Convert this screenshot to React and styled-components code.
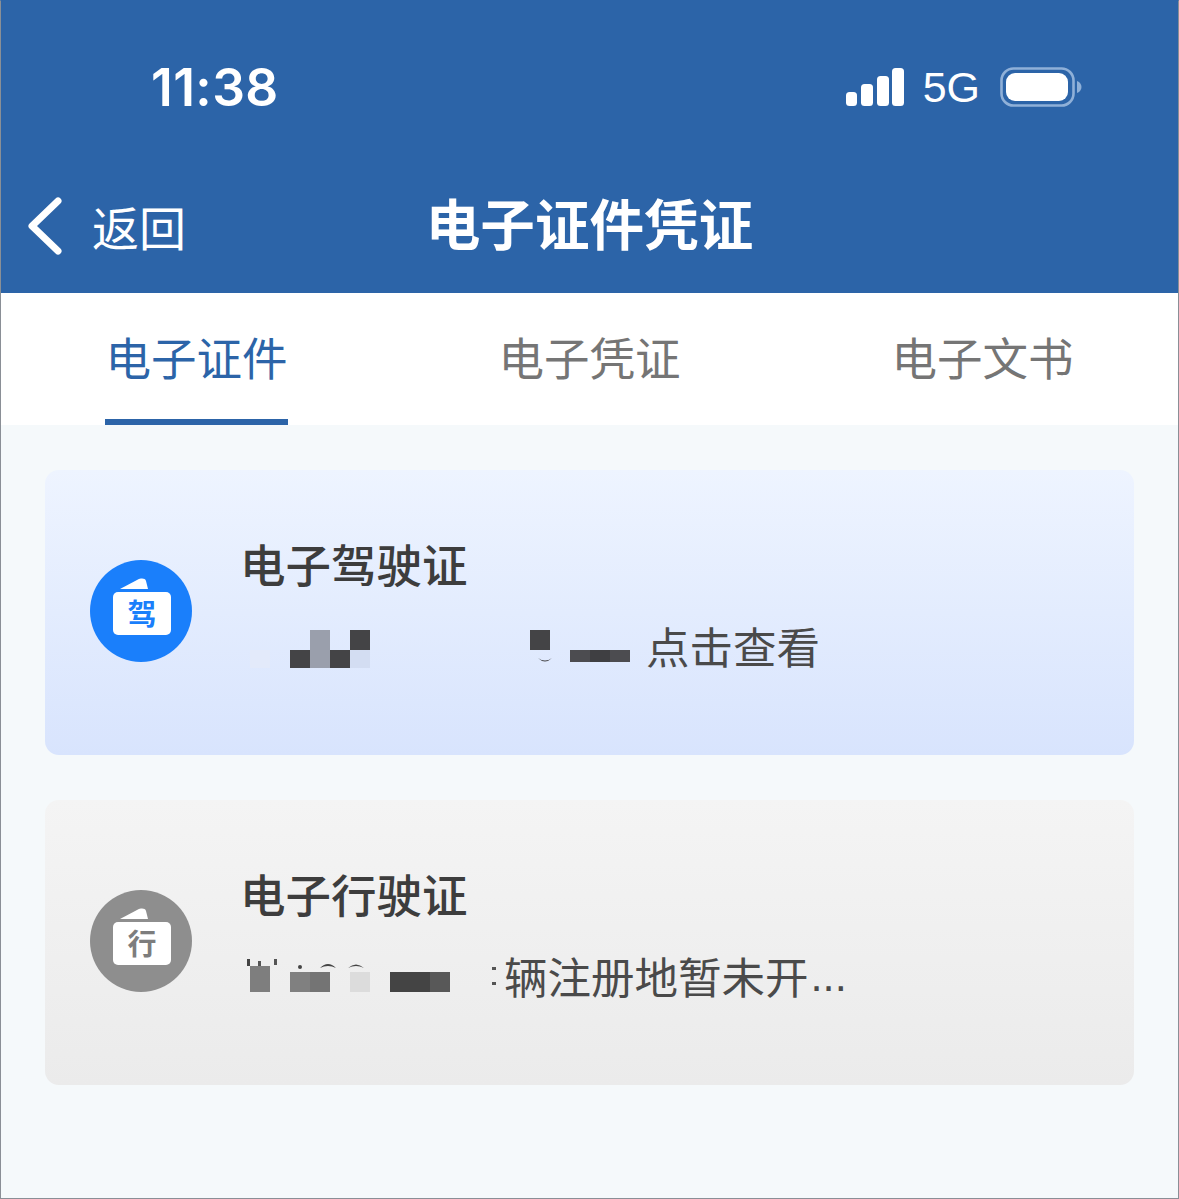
import React from "react";
import styled, { createGlobalStyle } from "styled-components";

const Global = createGlobalStyle`
  html, body { margin: 0; padding: 0; background: #f5f9fb; }
  * { box-sizing: border-box; }
`;

const cjk = `"Noto Sans CJK SC", "Noto Sans", sans-serif`;

const Page = styled.div`
  width: 1179px;
  height: 1199px;
  background: #f5f9fb;
  border: 1px solid #8a8f96;
  border-top: 1px solid #2c64a8;
  font-family: ${cjk};
  overflow: hidden;
`;
const Header = styled.header`
  height: 292px;
  background: #2c64a8;
  color: #fff;
  display: flex;
  flex-direction: column;
`;
const StatusBar = styled.div`
  height: 172px;
  display: flex;
  align-items: center;
  justify-content: space-between;
  padding: 0 94px 0 150px;
`;
const Clock = styled.span`
  font: 600 51.5px "Inter", "Liberation Sans", sans-serif;
  letter-spacing: 0.4px;
`;
const StatusRight = styled.div`
  display: flex;
  align-items: center;
`;
const NetLabel = styled.span`
  font: 400 43px "Liberation Sans", sans-serif;
  margin: 0 20px 0 18px;
`;
const NavBar = styled.div`
  height: 104px;
  position: relative;
  display: flex;
  align-items: center;
  justify-content: center;
`;
const Back = styled.div`
  position: absolute;
  left: 25px;
  top: 23px;
  display: flex;
  align-items: center;
  gap: 26px;
  font-size: 47px;
  font-weight: 400;
  line-height: 58px;
`;
const NavTitle = styled.h1`
  margin: 0 0 7px 0;
  font-size: 54.6px;
  font-weight: 700;
  line-height: 72px;
`;
const Tabs = styled.nav`
  height: 132px;
  background: #fff;
  display: grid;
  grid-template-columns: 393px 393px 393px;
  margin-left: -1px;
`;
const Tab = styled.div`
  position: relative;
  display: flex;
  justify-content: center;
  padding-top: 33px;
  font-size: 45.5px;
  line-height: 60px;
  font-weight: 400;
  color: ${(p) => (p.$active ? "#2c64a8" : "#757575")};
`;
const Underline = styled.span`
  position: absolute;
  left: 105px;
  width: 183px;
  bottom: 0;
  height: 6px;
  background: #2c64a8;
`;
const Cards = styled.main`
  padding: 45px 44px;
  display: flex;
  flex-direction: column;
  gap: 45px;
`;
const Card = styled.section`
  height: 285px;
  border-radius: 14px;
  background: ${(p) =>
    p.$muted
      ? "linear-gradient(180deg, #f4f4f4 0%, #ebebeb 100%)"
      : "linear-gradient(180deg, #eef4ff 0%, #d8e4fd 100%)"};
  display: flex;
  align-items: center;
  padding-left: 45px;
  gap: 48px;
`;
const Badge = styled.div`
  width: 102px;
  height: 102px;
  border-radius: 50%;
  background: ${(p) => (p.$muted ? "#8e8e8e" : "#1a7ffb")};
  position: relative;
  flex: none;
  margin-top: -3px;
`;
const FlapShape = ({ className }) => (
  <svg className={className} width="29" height="11" viewBox="0 0 29 11">
    <path d="M0 11 L17 2 C21 0 25 0 26 3 L28 11 Z" fill="#fff" />
  </svg>
);
const BadgeFlap = styled(FlapShape)`
  position: absolute;
  left: 30px;
  top: 18px;
`;
const BadgeCard = styled.div`
  position: absolute;
  left: 23px;
  top: 32px;
  width: 58px;
  height: 43px;
  background: #fff;
  border-radius: 5px;
  display: flex;
  align-items: center;
  justify-content: center;
  padding-bottom: 3px;
  font-size: 29px;
  line-height: 38px;
  font-weight: 600;
  color: ${(p) => (p.$muted ? "#7d7d7d" : "#1a7ffb")};
`;
const Body = styled.div`
  display: flex;
  flex-direction: column;
  margin-top: -17px;
`;
const CardTitle = styled.h2`
  margin: 0;
  font-size: 45.5px;
  line-height: 60px;
  font-weight: 500;
  color: #3d3d3d;
`;
const SubLine = styled.div`
  display: flex;
  align-items: center;
  height: 60px;
  margin-top: 23px;
  font-size: 43.5px;
  line-height: 60px;
  font-weight: 400;
  color: #4a4a4a;
  white-space: nowrap;
`;
const Ellipsis = styled.span`
  font-family: "Liberation Sans", sans-serif;
  margin-left: 2px;
`;
const Mosaic = styled.svg`
  display: block;
  flex: none;
  margin-left: 4px;
  margin-top: ${(p) => p.$drop}px;
`;

const Signal = () => (
  <svg width="60" height="38" viewBox="0 0 60 38">
    <rect x="1" y="24" width="11" height="14" rx="3.5" fill="#fff" />
    <rect x="16" y="16" width="12" height="22" rx="3.5" fill="#fff" />
    <rect x="32" y="8" width="12" height="30" rx="3.5" fill="#fff" />
    <rect x="47" y="0" width="12" height="38" rx="3.5" fill="#fff" />
  </svg>
);

const Battery = () => (
  <svg width="84" height="40" viewBox="0 0 84 40">
    <rect x="1.5" y="1.5" width="72" height="37" rx="12" fill="none" stroke="#8fb0d8" strokeWidth="2.6" />
    <rect x="6" y="6" width="62" height="28" rx="9" fill="#fff" />
    <path d="M77 14 C80 15 81.5 17.5 81.5 20 C81.5 22.5 80 25 77 26 Z" fill="#8fb0d8" />
  </svg>
);

const Chevron = () => (
  <svg width="40" height="60" viewBox="0 0 40 60">
    <path d="M32 5 L6 30 L32 55" fill="none" stroke="#fff" strokeWidth="7" strokeLinecap="round" strokeLinejoin="round" />
  </svg>
);

const MosaicOne = () => (
  <Mosaic $drop={12} width="402" height="44" viewBox="0 0 402 44">
    <rect x="6" y="20" width="20" height="18" fill="#e3eafa" />
    <rect x="46" y="20" width="20" height="18" fill="#444446" />
    <rect x="66" y="0" width="20" height="38" fill="#9a9fac" />
    <rect x="86" y="20" width="20" height="18" fill="#444446" />
    <rect x="106" y="0" width="20" height="20" fill="#444446" />
    <rect x="106" y="20" width="20" height="18" fill="#d3ddf2" />
    <rect x="286" y="0" width="20" height="20" fill="#444446" />
    <path d="M294 28 Q301 33 308 28 Q301 35 294 28 Z" fill="#444446" />
    <rect x="326" y="20" width="60" height="12" fill="#4c4c50" />
    <rect x="346" y="20" width="20" height="12" fill="#3f3f42" />
  </Mosaic>
);

const MosaicTwo = () => (
  <Mosaic $drop={4} width="260" height="44" viewBox="0 0 260 44">
    <rect x="6" y="10" width="20" height="26" fill="#7e7e7e" />
    <rect x="3" y="3" width="3" height="7" fill="#444" />
    <rect x="14" y="5" width="3" height="5" fill="#555" />
    <rect x="30" y="3" width="3" height="6" fill="#555" />
    <rect x="46" y="16" width="20" height="20" fill="#808080" />
    <rect x="66" y="16" width="20" height="20" fill="#747474" />
    <rect x="106" y="16" width="20" height="20" fill="#dcdcdc" />
    <circle cx="56" cy="11" r="2" fill="#444" />
    <path d="M76 12 Q84 4 92 12 Q84 8 76 12 Z" fill="#444" />
    <path d="M104 12 Q112 5 120 12 Q112 8 104 12 Z" fill="#444" />
    <rect x="146" y="16" width="40" height="20" fill="#444" />
    <rect x="186" y="16" width="20" height="20" fill="#585858" />
    <rect x="248" y="11" width="4" height="3" fill="#555" />
    <rect x="248" y="26" width="4" height="3" fill="#555" />
  </Mosaic>
);

const Entry = ({ muted, glyph, title, mosaic, children }) => (
  <Card $muted={muted}>
    <Badge $muted={muted}>
      <BadgeFlap />
      <BadgeCard $muted={muted}>{glyph}</BadgeCard>
    </Badge>
    <Body>
      <CardTitle>{title}</CardTitle>
      <SubLine>
        {mosaic}
        {children}
      </SubLine>
    </Body>
  </Card>
);

export default function App() {
  return (
    <Page>
      <Global />
      <Header>
        <StatusBar>
          <Clock>11:38</Clock>
          <StatusRight>
            <Signal />
            <NetLabel>5G</NetLabel>
            <Battery />
          </StatusRight>
        </StatusBar>
        <NavBar>
          <Back>
            <Chevron />
            <span>返回</span>
          </Back>
          <NavTitle>电子证件凭证</NavTitle>
        </NavBar>
      </Header>
      <Tabs>
        <Tab $active>
          电子证件
          <Underline />
        </Tab>
        <Tab>电子凭证</Tab>
        <Tab>电子文书</Tab>
      </Tabs>
      <Cards>
        <Entry glyph="驾" title="电子驾驶证" mosaic={<MosaicOne />}>
          点击查看
        </Entry>
        <Entry muted glyph="行" title="电子行驶证" mosaic={<MosaicTwo />}>
          辆注册地暂未开<Ellipsis>...</Ellipsis>
        </Entry>
      </Cards>
    </Page>
  );
}
